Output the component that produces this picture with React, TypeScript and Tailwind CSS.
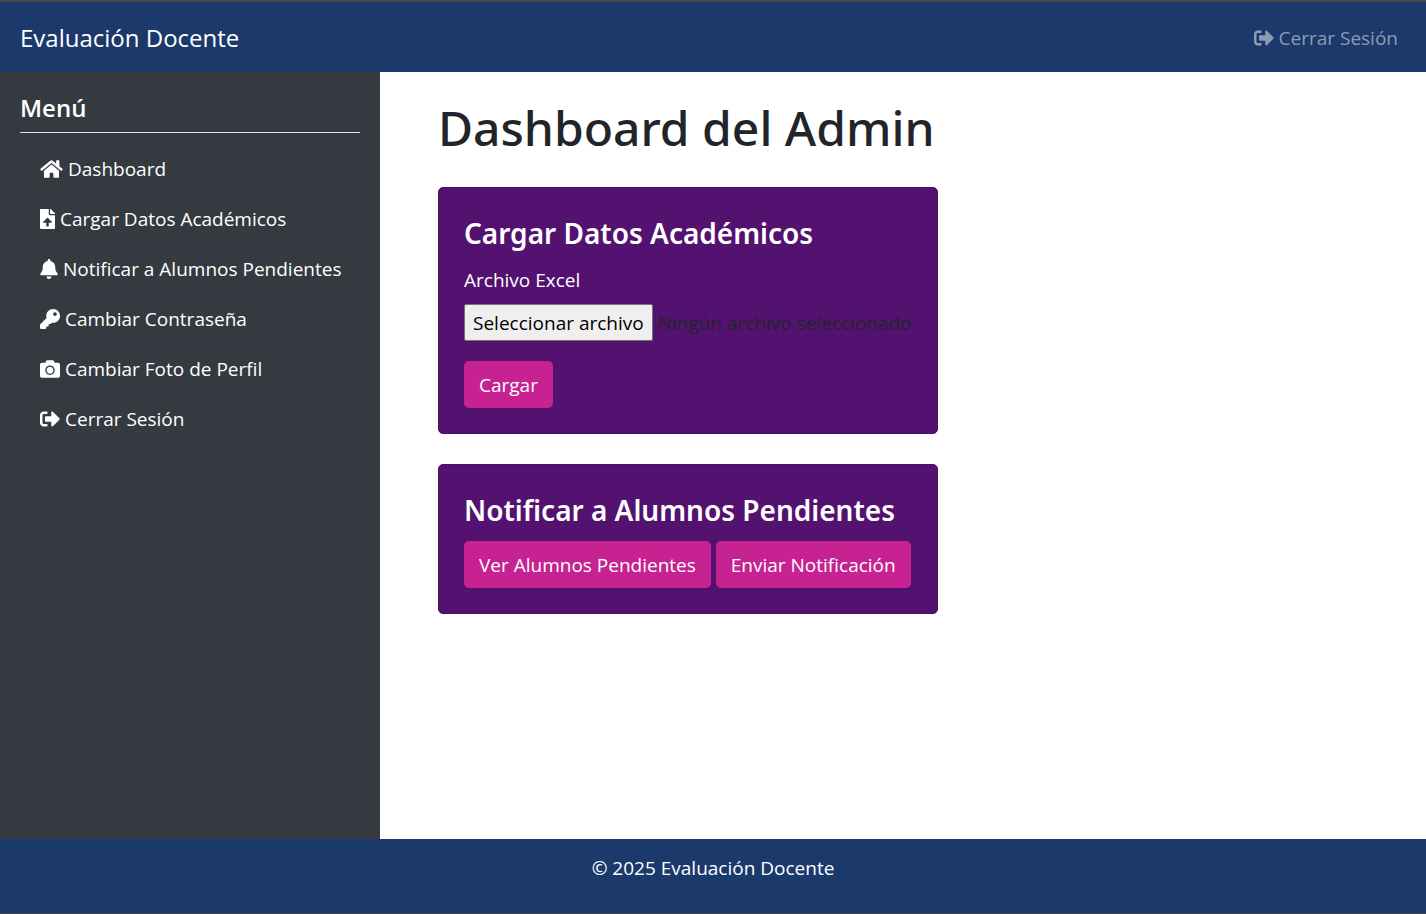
import type { ReactNode } from "react";
import type { IconType } from "react-icons";
import { FaBell, FaCamera, FaFileUpload, FaHome, FaKey, FaSignOutAlt } from "react-icons/fa";

type MenuItem = { label: string; icon: IconType; iconWidth: string; href: string };

const menuItems: MenuItem[] = [
  { label: "Dashboard", icon: FaHome, iconWidth: "w-[23px]", href: "#dashboard" },
  { label: "Cargar Datos Académicos", icon: FaFileUpload, iconWidth: "w-[15px]", href: "#cargar" },
  { label: "Notificar a Alumnos Pendientes", icon: FaBell, iconWidth: "w-[18px]", href: "#notificar" },
  { label: "Cambiar Contraseña", icon: FaKey, iconWidth: "w-5", href: "#contrasena" },
  { label: "Cambiar Foto de Perfil", icon: FaCamera, iconWidth: "w-5", href: "#foto" },
  { label: "Cerrar Sesión", icon: FaSignOutAlt, iconWidth: "w-5", href: "#salir" },
];

function Card({ id, title, children }: { id: string; title: string; children: ReactNode }) {
  return (
    <section id={id} className="w-[500px] max-w-full rounded-[5px] border border-[#48105f] bg-[#541270] p-[25px]">
      <h2 className="mb-[11px] font-['Noto_Sans',sans-serif] text-[28px] leading-10 font-semibold text-white">{title}</h2>
      {children}
    </section>
  );
}

function PinkButton({ children, type = "button" }: { children: ReactNode; type?: "button" | "submit" }) {
  return (
    <button type={type} className="h-[47px] rounded-[5px] bg-[#c72292] px-[15px] text-[19px] whitespace-nowrap text-white">
      {children}
    </button>
  );
}

export default function App() {
  return (
    <div className="flex min-h-screen flex-col bg-white font-['Open_Sans',sans-serif] text-[19px] leading-[30px] text-[#212529]">
      <header className="flex h-[72px] items-center justify-between border-t-2 border-[#474747] bg-[#1c396b] pt-0.5 pr-7 pl-5">
        <a href="#inicio" className="text-[24px] text-white">Evaluación Docente</a>
        <a href="#salir" className="flex items-center gap-[5px] text-[#8d9cb5]">
          <FaSignOutAlt className="size-5" aria-hidden />
          Cerrar Sesión
        </a>
      </header>

      <div className="flex flex-1">
        <aside className="w-[380px] shrink-0 bg-[#353940] p-5 text-white">
          <h2 className="border-b border-[#dee2e6] pt-0.5 pb-2.5 text-[24px] leading-7 font-semibold">Menú</h2>
          <nav className="pt-[11px]">
            <ul>
              {menuItems.map(({ label, icon: Icon, iconWidth, href }) => (
                <li key={label}>
                  <a href={href} className="flex h-[50px] items-center gap-[5px] px-5 whitespace-nowrap">
                    <Icon className={`h-5 shrink-0 ${iconWidth}`} aria-hidden />
                    {label}
                  </a>
                </li>
              ))}
            </ul>
          </nav>
        </aside>

        <main className="flex min-w-0 flex-1 flex-col items-start gap-[30px] px-[58px] pt-[27px] pb-8">
          <h1 className="font-['Noto_Sans',sans-serif] text-[48px] leading-[58px] font-medium">Dashboard del Admin</h1>

          <Card id="cargar" title="Cargar Datos Académicos">
            <form>
              <label htmlFor="archivo" className="mb-2 block leading-8 text-white">Archivo Excel</label>
              <input id="archivo" type="file" accept=".xls,.xlsx" className="sr-only" />
              <label htmlFor="archivo" className="mb-5 flex items-center gap-[5px] whitespace-nowrap text-[#212529]">
                <span className="flex h-[37px] items-center rounded-[2px] border border-[#767676] bg-[#efefef] px-2 text-black">
                  Seleccionar archivo
                </span>
                Ningún archivo seleccionado
              </label>
              <PinkButton type="submit">Cargar</PinkButton>
            </form>
          </Card>

          <Card id="notificar" title="Notificar a Alumnos Pendientes">
            <div className="flex gap-[5px]">
              <PinkButton>Ver Alumnos Pendientes</PinkButton>
              <PinkButton>Enviar Notificación</PinkButton>
            </div>
          </Card>
        </main>
      </div>

      <footer className="h-[75px] border-b border-[#474747] bg-[#1c396b] pt-3.5 text-center text-white">
        <p>© 2025 Evaluación Docente</p>
      </footer>
    </div>
  );
}
